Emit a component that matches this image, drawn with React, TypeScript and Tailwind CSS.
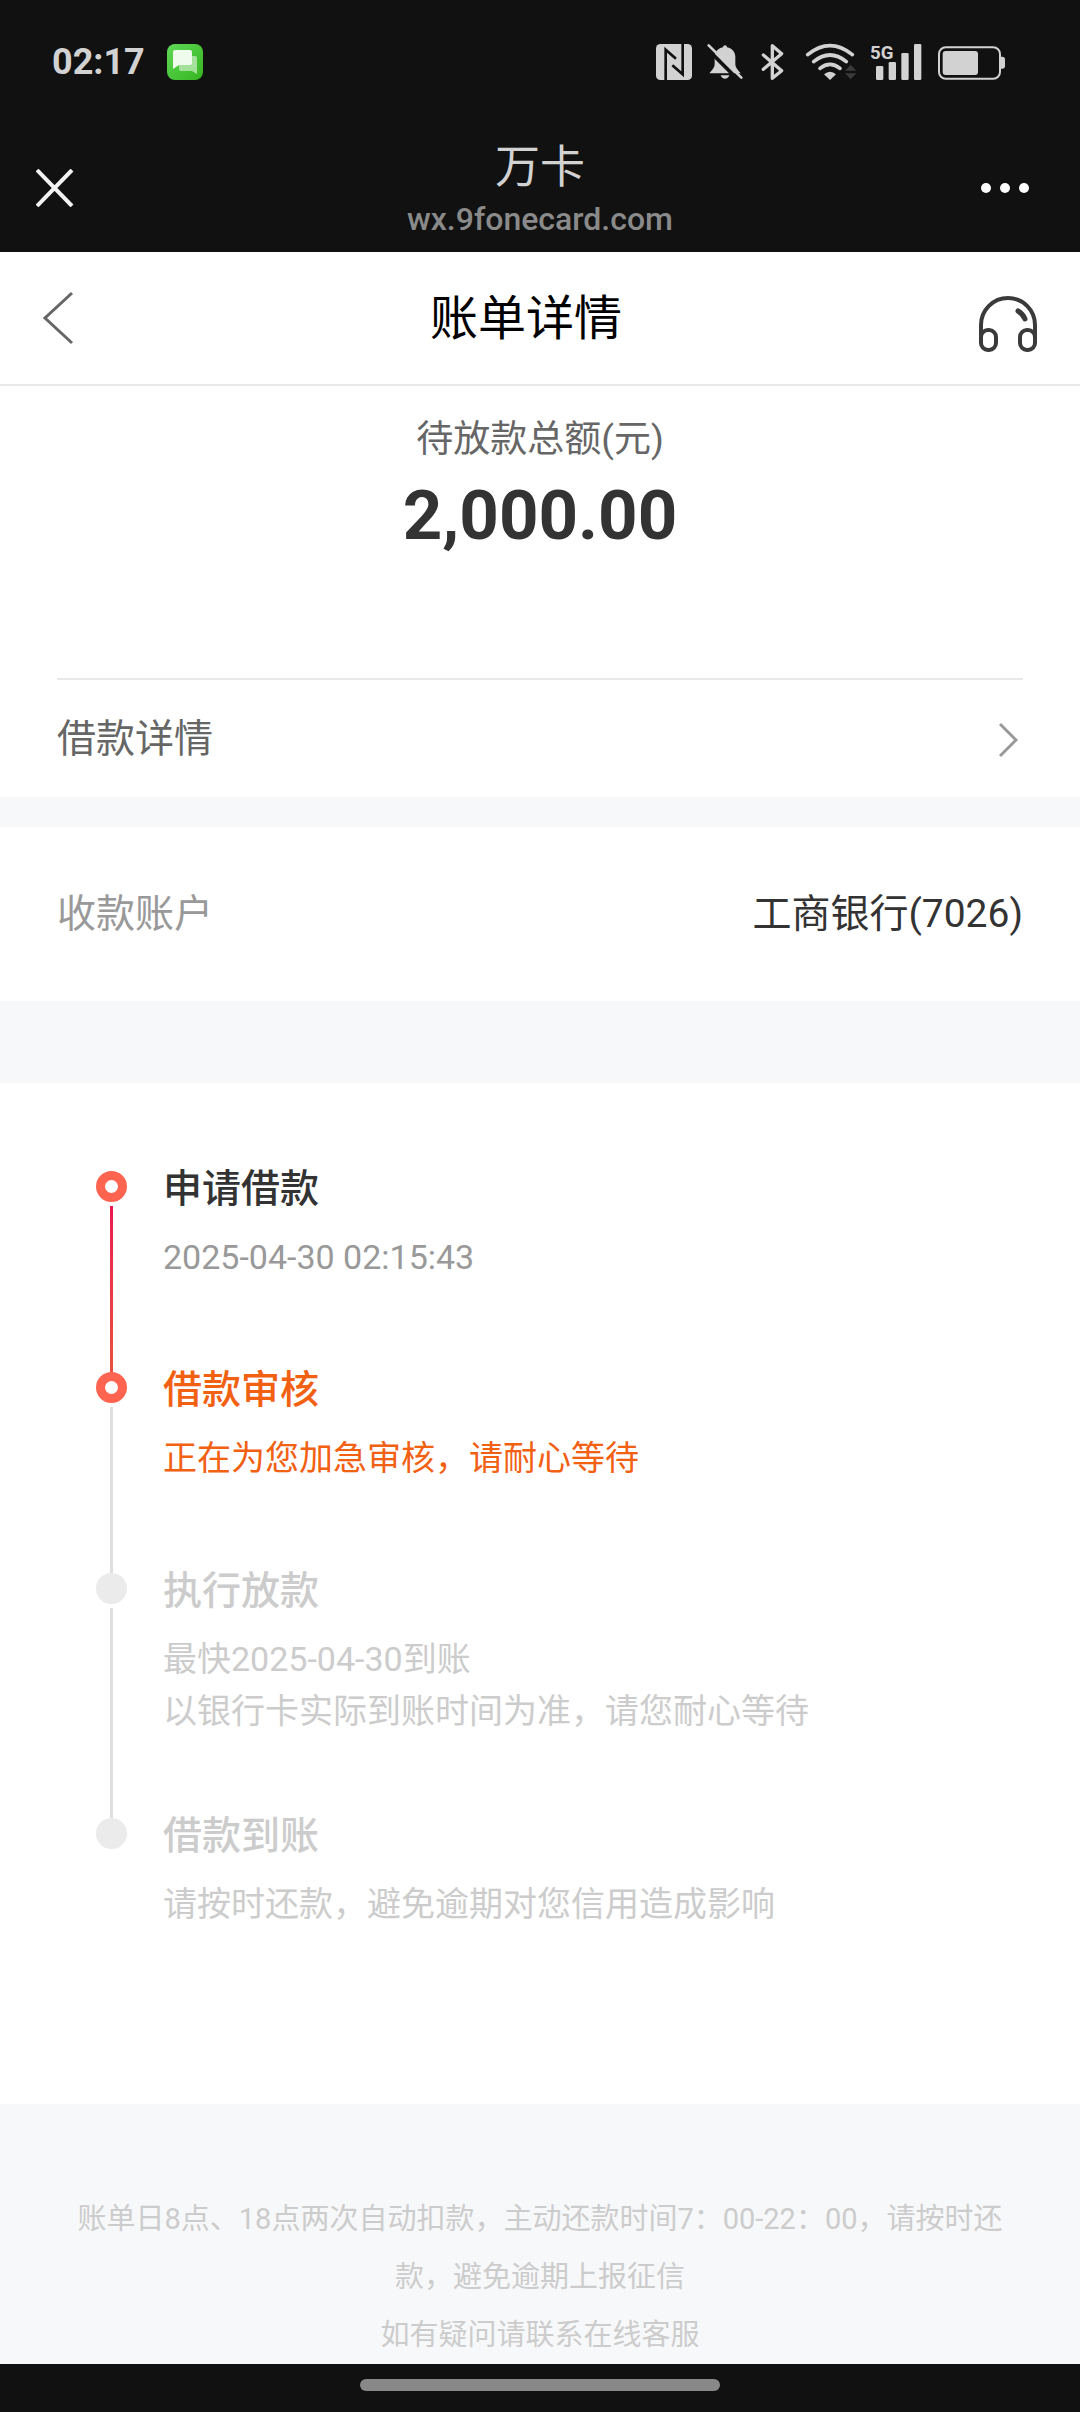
import { clsx } from 'clsx';

interface Step {
  title: string;
  lines: string[];
  state: 'done' | 'current' | 'pending';
}

const steps: Step[] = [
  { title: '申请借款', lines: ['2025-04-30 02:15:43'], state: 'done' },
  { title: '借款审核', lines: ['正在为您加急审核，请耐心等待'], state: 'current' },
  {
    title: '执行放款',
    lines: ['最快2025-04-30到账', '以银行卡实际到账时间为准，请您耐心等待'],
    state: 'pending',
  },
  { title: '借款到账', lines: ['请按时还款，避免逾期对您信用造成影响'], state: 'pending' },
];

function StatusIcons() {
  return (
    <div className="flex items-center gap-[14px] text-[#d2d2d2]">
      {/* NFC */}
      <svg className="h-10 w-9" viewBox="0 0 108 120" fill="none" aria-hidden="true">
        <rect y="6" width="108" height="108" rx="13" fill="currentColor" />
        <path d="M29 114V23L60 50M80 6V97L49 70" stroke="#111" strokeWidth="8" />
      </svg>
      {/* Muted bell */}
      <svg className="h-10 w-[38px]" viewBox="0 0 114 120" aria-hidden="true">
        <path
          d="M57 10c3 0 6 2 6 6 16 3 25 15 25 29v22c0 8 5 15 16 27H10c11-12 16-19 16-27V45c0-14 9-26 25-29 0-4 3-6 6-6z"
          fill="currentColor"
        />
        <path d="M44 100h26c-2 7-7 10-13 10s-11-3-13-10z" fill="currentColor" />
        <path d="M0 17l100 100" stroke="#111" strokeWidth="11" />
        <path d="M8 10l98 97" stroke="currentColor" strokeWidth="8" strokeLinecap="round" />
      </svg>
      {/* Bluetooth */}
      <svg className="h-10 w-8" viewBox="0 0 96 120" fill="none" aria-hidden="true">
        <path
          d="M16 39l55 47-28 23V11l28 24-55 47"
          stroke="currentColor"
          strokeWidth="10"
          strokeLinejoin="round"
          strokeLinecap="round"
        />
      </svg>
      {/* Wi-Fi */}
      <svg className="h-10 w-[52px]" viewBox="0 0 156 120" fill="none" aria-hidden="true">
        <g stroke="currentColor" strokeWidth="11" strokeLinecap="round">
          <path d="M11 38q67-54 134 0" />
          <path d="M29 59q49-40 98 0" />
          <path d="M48 79q30-24 60 0" />
        </g>
        <path d="M78 114L60 97q18-16 36 0z" fill="currentColor" />
        <path d="M140 68l17 18h-34zM140 112l17-18h-34z" fill="#3a3a3a" />
      </svg>
      {/* Mobile signal */}
      <svg className="h-10 w-[52px]" viewBox="0 0 156 120" fill="currentColor" aria-hidden="true">
        <text x="0" y="50" className="font-[Roboto] text-[56px] font-bold">
          5G
        </text>
        <rect x="18" y="72" width="22" height="42" rx="4" />
        <rect x="56" y="60" width="22" height="54" rx="4" />
        <rect x="94" y="33" width="22" height="81" rx="4" />
        <rect x="132" y="6" width="22" height="108" rx="4" />
      </svg>
      {/* Battery */}
      <svg className="h-10 w-[70px]" viewBox="0 0 210 120" fill="none" aria-hidden="true">
        <rect x="9" y="16" width="183" height="94" rx="20" stroke="currentColor" strokeWidth="6" />
        <rect x="20" y="27" width="106" height="72" rx="9" fill="currentColor" />
        <path d="M194 44h5q8 0 8 8v20q0 8-8 8h-5z" fill="currentColor" />
      </svg>
    </div>
  );
}

function StatusBar() {
  return (
    <div className="flex h-[124px] items-center justify-between pr-[74px] pl-[52px]">
      <div className="flex h-10 items-center gap-[22px] text-[#d2d2d2]">
        <span className="font-[Roboto,sans-serif] text-[36px] leading-10 font-bold">02:17</span>
        <svg className="size-9" viewBox="0 0 36 36" aria-hidden="true">
          <defs>
            <linearGradient id="msg" x1="0" y1="0" x2="1" y2="1">
              <stop stopColor="#5fd957" />
              <stop offset="1" stopColor="#35b41f" />
            </linearGradient>
          </defs>
          <rect width="36" height="36" rx="8" fill="url(#msg)" />
          <path d="M14 12h14q2 0 2 2v16l-5-3H14q-2 0-2-2V14q0-2 2-2z" fill="#a4e29b" />
          <path d="M8 6h15q2 0 2 2v11q0 2-2 2H12l-6 4V8q0-2 2-2z" fill="#effbed" />
        </svg>
      </div>
      <StatusIcons />
    </div>
  );
}

function BrowserBar() {
  return (
    <div className="flex h-32 items-center px-9">
      <button type="button" aria-label="关闭" className="w-16">
        <svg className="size-[38px]" viewBox="0 0 38 38" aria-hidden="true">
          <path d="M1 1l35 36M36 1L1 37" stroke="#f2f2f2" strokeWidth="4" />
        </svg>
      </button>
      <div className="flex flex-1 flex-col items-center pt-[6px]">
        <span className="text-[45px] leading-[56px] text-[#d2d2d2]">万卡</span>
        <span className="text-[32px] leading-[46px] font-medium text-[#8a8a8a]">wx.9fonecard.com</span>
      </div>
      <button type="button" aria-label="更多" className="w-16">
        <svg className="h-3 w-[50px]" viewBox="0 0 50 12" fill="#fff" aria-hidden="true">
          <circle cx="6" cy="6" r="5" />
          <circle cx="25" cy="6" r="5" />
          <circle cx="44" cy="6" r="5" />
        </svg>
      </button>
    </div>
  );
}

function PageNav() {
  return (
    <nav className="flex h-[134px] items-center border-b-2 border-[#e8e8e8] px-[42px]">
      <button type="button" aria-label="返回" className="w-8">
        <svg className="h-[54px] w-8" viewBox="0 0 32 54" fill="none" aria-hidden="true">
          <path d="M30 2L3 27l27 25" stroke="#666" strokeWidth="3" />
        </svg>
      </button>
      <h1 className="flex-1 pt-[2px] text-center text-[48px] leading-[64px] text-black">账单详情</h1>
      <button type="button" aria-label="客服" className="w-15">
        <svg className="h-[68px] w-15" viewBox="0 0 60 68" fill="none" aria-hidden="true">
          <g stroke="#3a3a3a" strokeWidth="4">
            <path d="M3 58V41a27 27 0 0 1 54 0v17" />
            <rect x="3" y="46" width="15" height="20" rx="7" />
            <rect x="42" y="46" width="15" height="20" rx="7" />
            <path d="M40 27q5 3 7 8" strokeWidth="5" strokeLinecap="round" />
          </g>
        </svg>
      </button>
    </nav>
  );
}

function StepItem({ step, last, nextActive }: { step: Step; last: boolean; nextActive: boolean }) {
  const active = step.state !== 'pending';

  return (
    <li className={clsx('flex gap-9', !last && 'min-h-[201px]')}>
      <div className="flex w-8 flex-col items-center pt-2">
        <span
          className={clsx('size-[31px] rounded-full', active ? 'border-[9px] border-[#ff6450] bg-white' : 'bg-[#ebebeb]')}
        />
        {!last && (
          <span
            className={clsx(
              'mt-1 -mb-2 w-[3px] flex-1',
              nextActive ? 'bg-linear-to-b from-[#e8174f] to-[#e9503c]' : 'bg-[#dfdfdf]'
            )}
          />
        )}
      </div>
      <div className={clsx(!last && 'pb-[73px]')}>
        <h2
          className={clsx(
            'text-[39px] leading-[52px] font-medium',
            step.state === 'done' && 'text-[#333]',
            step.state === 'current' && 'text-[#f26012]',
            step.state === 'pending' && 'text-[#ccc]'
          )}
        >
          {step.title}
        </h2>
        <div
          className={clsx(
            'mt-4 text-[34px] leading-[52px]',
            step.state === 'done' && 'text-[#999]',
            step.state === 'current' && 'text-[#f26012]',
            step.state === 'pending' && 'text-[#ccc]'
          )}
        >
          {step.lines.map((line) => (
            <p key={line}>{line}</p>
          ))}
        </div>
      </div>
    </li>
  );
}

export default function App() {
  return (
    <div className="flex min-h-screen flex-col bg-[#f7f8fa] font-[Roboto,'Noto_Sans_CJK_SC',sans-serif]">
      <header className="bg-[#111]">
        <StatusBar />
        <BrowserBar />
      </header>

      <main className="flex-1">
        <div className="bg-white">
          <PageNav />

          {/* Amount */}
          <section className="px-[57px] pt-7 text-center">
            <p className="text-[37px] leading-[52px] text-[#666]">待放款总额(元)</p>
            <p className="mt-[10px] text-[69px] leading-20 font-bold text-[#333]">2,000.00</p>
          </section>

          <div className="mt-[122px] px-[57px]">
            <button
              type="button"
              className="flex h-[119px] w-full items-center justify-between border-t-2 border-[#e8e8e8] pt-[2px] pr-1 text-[39px] text-[#666]"
            >
              借款详情
              <svg className="h-9 w-5" viewBox="0 0 20 36" fill="none" aria-hidden="true">
                <path d="M1 2l16 16L1 34" stroke="#999" strokeWidth="3" />
              </svg>
            </button>
          </div>
        </div>

        {/* Receiving account */}
        <section className="mt-[30px] flex h-[174px] items-center justify-between bg-white px-[57px] text-[39px]">
          <span className="text-[#999]">收款账户</span>
          <span className="text-[#333]">工商银行(7026)</span>
        </section>

        {/* Progress */}
        <section className="mt-[82px] bg-white pt-20 pr-[57px] pb-[174px] pl-[95px]">
          <ol>
            {steps.map((step, i) => (
              <StepItem
                key={step.title}
                step={step}
                last={i === steps.length - 1}
                nextActive={i < steps.length - 1 && steps[i + 1].state !== 'pending'}
              />
            ))}
          </ol>
        </section>

        <footer className="px-[68px] pt-[86px] text-center text-[29px] leading-[58px] text-[#ccc]">
          <p>账单日8点、18点两次自动扣款，主动还款时间7：00-22：00，请按时还款，避免逾期上报征信</p>
          <p>如有疑问请联系在线客服</p>
        </footer>
      </main>

      {/* Gesture bar */}
      <div className="flex h-12 justify-center bg-[#111] pt-[15px]">
        <div className="h-3 w-1/3 rounded-full bg-[#888]" />
      </div>
    </div>
  );
}
